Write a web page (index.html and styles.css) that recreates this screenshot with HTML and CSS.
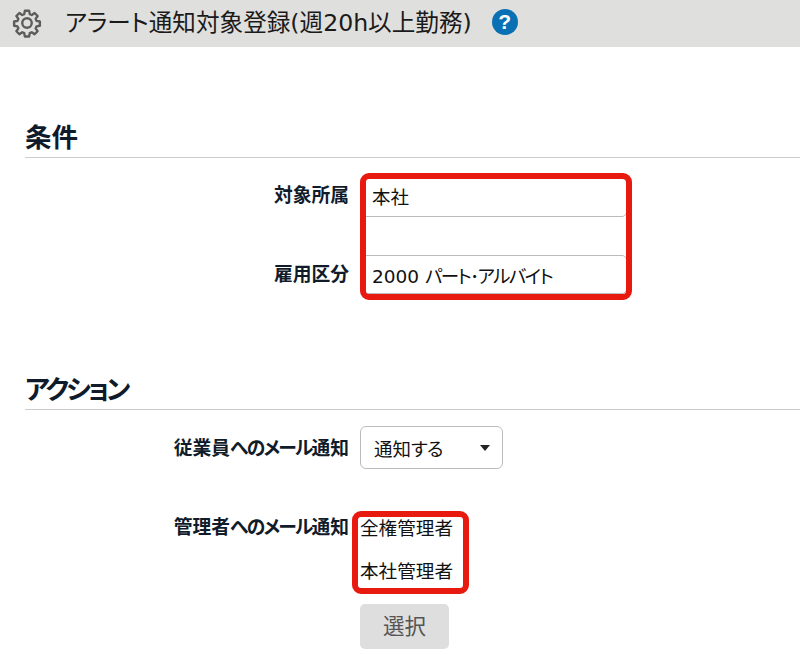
FILE: index.html
```html
<!DOCTYPE html>
<html lang="ja">
<head>
<meta charset="utf-8">
<title>アラート通知対象登録</title>
<link rel="stylesheet" href="styles.css">
</head>
<body>
<header class="topbar">
  <svg class="gear" width="30" height="30" viewBox="0 0 24 24" fill="none" stroke="#5c5c5c" stroke-width="1.9" stroke-linejoin="round">
    <path d="M10.3 2.2h3.4l.5 2.7 1.6.7 2.3-1.6 2.4 2.4-1.6 2.3.7 1.6 2.7.5v3.4l-2.7.5-.7 1.6 1.6 2.3-2.4 2.4-2.3-1.6-1.6.7-.5 2.7h-3.4l-.5-2.7-1.6-.7-2.3 1.6-2.4-2.4 1.6-2.3-.7-1.6-2.7-.5v-3.4l2.7-.5.7-1.6-1.6-2.3 2.4-2.4 2.3 1.6 1.6-.7z"/>
    <circle cx="12" cy="12" r="3.8"/>
  </svg>
  <h1 class="title">アラート通知対象登録(週20h以上勤務)</h1>
  <span class="help">?</span>
</header>
<main class="content">
  <section class="section first">
    <h2 class="heading">条件</h2>
    <div class="row row-org">
      <div class="label">対象所属</div>
      <div class="field field-wide">本社</div>
    </div>
    <div class="row row-emp">
      <div class="label">雇用区分</div>
      <div class="field field-wide">2000 <span class="kana">パート･アルバイト</span></div>
    </div>
    <div class="mark mark-a"></div>
  </section>
  <section class="section second">
    <h2 class="heading"><span class="kana-head">アクション</span></h2>
    <div class="row row-mail">
      <div class="label">従業員<span class="kana-label">へのメール</span>通知</div>
      <div class="select"><span>通知<span class="kana-small">する</span></span><i class="caret"></i></div>
    </div>
    <div class="row row-admin">
      <div class="label">管理者<span class="kana-label">へのメール</span>通知</div>
      <div class="admins">
        <div class="admin">全権管理者</div>
        <div class="admin">本社管理者</div>
        <div class="mark mark-b"></div>
      </div>
    </div>
    <div class="row row-btn">
      <div class="label"></div>
      <button class="btn" type="button">選択</button>
    </div>
  </section>
</main>
</body>
</html>
```
FILE: styles.css
```css
* { box-sizing: border-box; }
html, body { margin: 0; padding: 0; }
body {
  width: 800px;
  height: 655px;
  overflow: hidden;
  background: #fff;
  color: #0f1a2a;
  font-family: "DejaVu Sans", "Noto Sans CJK JP", sans-serif;
  font-feature-settings: "palt";
}
.topbar {
  height: 47px;
  background: #dfdfdd;
  display: flex;
  align-items: center;
  padding-left: 12px;
}
.gear { flex: none; margin-top: -1px; }
.title {
  margin: 0 0 0 23px;
  font-size: 23.6px;
  font-weight: 400;
  line-height: 47px;
  color: #1a1a1a;
  white-space: nowrap;
}
.help {
  margin-left: 20px;
  margin-top: -4px;
  width: 26px;
  height: 26px;
  border-radius: 50%;
  background: #0a70b4;
  color: #fff;
  font: 700 21px/26px "Liberation Sans", sans-serif;
  text-align: center;
}
.content { position: relative; }
.section { position: relative; padding-left: 25px; }
.first { padding-top: 74px; }
.second { padding-top: 79px; }
.heading {
  margin: 0;
  height: 37px;
  font-size: 26.5px;
  line-height: 34px;
  font-weight: 700;
  border-bottom: 1px solid #ccc;
  margin-right: -25px;
  color: #0f1a2a;
}
.kana-head { letter-spacing: -3px; }
.row {
  display: flex;
  margin-left: -25px;
}
.label {
  width: 349px;
  flex: none;
  text-align: right;
  font-size: 18.75px;
  font-weight: 700;
  line-height: 24px;
  color: #111c2b;
}
.kana-label { letter-spacing: -1.7px; }
.kana { letter-spacing: -1.6px; }
.kana-small { letter-spacing: -1px; }
.row-org { margin-top: 20px; height: 39px; }
.row-emp { margin-top: 38px; height: 39px; }
.row-org .label { margin-top: 6px; }
.row-emp .label { margin-top: 8px; }
.field {
  border: 1px solid #bbb;
  border-radius: 5px;
  background: #fff;
  font-size: 18.5px;
  line-height: 26px;
  padding: 6px 10px 4px;
  color: #111;
}
.row-emp .field { padding-top: 8px; padding-bottom: 2px; }
.field-wide { width: 266px; height: 39px; margin-left: 12px; }
.mark {
  position: absolute;
  border: 6px solid #e8190f;
  border-radius: 9px;
  pointer-events: none;
}
.mark-a { left: 360px; top: 126px; width: 272px; height: 127px; }
.row-mail { margin-top: 16px; }
.row-mail .label { margin-top: 11px; }
.select {
  margin-left: 11px;
  width: 143px;
  height: 43px;
  border: 1px solid #bbb;
  border-radius: 6px;
  display: flex;
  align-items: center;
  justify-content: space-between;
  padding: 0 12px 0 13px;
  font-size: 18.5px;
  color: #111;
}
.caret {
  width: 0;
  height: 0;
  border-left: 5.5px solid transparent;
  border-right: 5.5px solid transparent;
  border-top: 6px solid #222;
}
.row-admin { margin-top: 29px; }
.row-admin .label { margin-top: 18px; }
.admins {
  position: relative;
  margin-left: 11px;
  padding-top: 18px;
}
.admin {
  font-size: 18.6px;
  line-height: 26px;
  height: 43px;
  white-space: nowrap;
  color: #111;
}
.mark-b { left: -8px; top: 13px; width: 117px; height: 83px; }
.row-btn { margin-top: 2px; }
.btn {
  margin-left: 11px;
  width: 89px;
  height: 45px;
  border: none;
  border-radius: 5px;
  background: #dedede;
  color: #555;
  font-family: inherit;
  font-size: 21.5px;
  padding: 0 0 4px;
}
```
